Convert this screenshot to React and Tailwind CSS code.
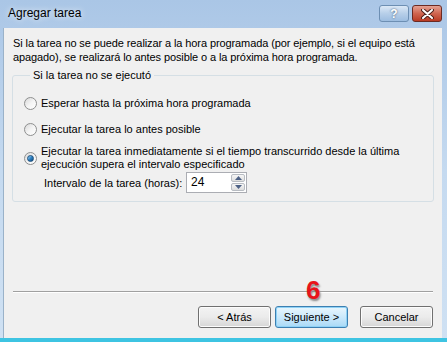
import React from "react";

const Radio = ({ checked }) => (
  <span className="relative flex h-[13px] w-[13px] shrink-0 items-center justify-center rounded-full border border-[#8e8f8f] bg-gradient-to-br from-[#d8d8d8] via-[#f4f4f4] to-[#ffffff]">
    {checked && (
      <span className="h-[7px] w-[7px] rounded-full border border-[#1c4f7c] bg-gradient-to-br from-[#9fd8f6] via-[#2f82c4] to-[#0e4a7d]" />
    )}
  </span>
);

const WinButton = ({ children, focused }) => (
  <button
    className={
      focused
        ? "h-[22px] w-[73px] rounded-[3px] border border-[#3c7fb1] bg-gradient-to-b from-[#e9f6fd] via-[#cbe9fb] to-[#a9daf6] text-[11px] text-black shadow-[inset_0_0_0_1px_#8fd2f6]"
        : "h-[22px] w-[73px] rounded-[3px] border border-[#707070] bg-gradient-to-b from-[#f3f3f3] via-[#ebebeb] to-[#d6d6d6] text-[11px] text-black shadow-[inset_0_0_0_1px_#fcfcfc]"
    }
  >
    {children}
  </button>
);

const App = () => {
  return (
    <div
      className="relative flex h-[342px] w-[447px] flex-col overflow-hidden bg-gradient-to-b from-[#aac6e6] via-[#c5daf0] to-[#cfe1f3] text-black"
      style={{ fontFamily: '"Liberation Sans", Arial, sans-serif' }}
    >
      {/* title bar */}
      <div className="flex h-[28px] shrink-0 items-start pl-[8px] pr-[5px] pt-[5px]">
        <span className="mt-[1px] text-[12px] leading-[14px] [text-shadow:0_0_6px_#ffffff]">
          Agregar tarea
        </span>
        <div className="ml-auto flex gap-[3px]">
          <div className="flex h-[17px] w-[30px] items-center justify-center rounded-[3px] border border-[#6d8fb3] bg-gradient-to-b from-[#dbe8f6] via-[#b7cfe9] to-[#9dbde0] text-[12px] font-bold leading-none text-white [text-shadow:0_0_2px_#2b4563]">
            ?
          </div>
          <div className="flex h-[17px] w-[30px] items-center justify-center rounded-[3px] border border-[#6b2a22] bg-gradient-to-b from-[#e4a193] via-[#cf6550] to-[#b93a23]">
            <svg width="13" height="10" viewBox="0 0 13 10">
              <path d="M2 1 L11 9 M11 1 L2 9" stroke="#4a1f1a" strokeWidth="4" strokeLinecap="round" />
              <path d="M2 1 L11 9 M11 1 L2 9" stroke="#ffffff" strokeWidth="2" strokeLinecap="round" />
            </svg>
          </div>
        </div>
      </div>

      {/* client area */}
      <div className="ml-[3px] mr-[5px] flex flex-1 flex-col border-l border-[#9ab2c9] bg-[#f0f0f0] text-[11px]">
        <p className="pl-[9px] pr-[10px] pt-[8px] leading-[14px] tracking-[-0.1px]">
          Si la tarea no se puede realizar a la hora programada (por ejemplo, si el equipo está apagado), se realizará lo antes posible o a la próxima hora programada.
        </p>

        <fieldset className="mx-[8px] mt-[4px] rounded-[3px] border border-[#d5dfe5] pb-[8px] pl-[11px] pr-[10px]">
          <legend className="ml-[6px] px-[3px] leading-[14px]">Si la tarea no se ejecutó</legend>

          <div className="mt-[14px] flex items-center gap-[4px] leading-[14px]">
            <Radio />
            <span>Esperar hasta la próxima hora programada</span>
          </div>
          <div className="mt-[12px] flex items-center gap-[4px] leading-[14px]">
            <Radio />
            <span>Ejecutar la tarea lo antes posible</span>
          </div>
          <div className="mt-[9px] flex items-center gap-[4px] leading-[13px]">
            <Radio checked />
            <span>
              Ejecutar la tarea inmediatamente si el tiempo transcurrido desde la última
              <br />
              ejecución supera el intervalo especificado
            </span>
          </div>
          <div className="mt-[1px] flex items-center pl-[20px]">
            <span className="w-[142px] leading-[14px]">Intervalo de la tarea (horas):</span>
            <div className="flex h-[21px] w-[61px] border border-[#abadb3] bg-white">
              <span className="flex-1 pl-[4px] pt-[2px] text-[12px] leading-[14px]">24</span>
              <div className="flex w-[16px] flex-col gap-[1px] p-[1px]">
                <div className="flex flex-1 items-center justify-center rounded-[2px] border border-[#b8bcc2] bg-gradient-to-b from-[#f6f6f6] to-[#dedede]">
                  <svg width="7" height="4" viewBox="0 0 7 4">
                    <path d="M0 4 L3.5 0 L7 4 Z" fill="#4d6185" />
                  </svg>
                </div>
                <div className="flex flex-1 items-center justify-center rounded-[2px] border border-[#b8bcc2] bg-gradient-to-b from-[#f6f6f6] to-[#dedede]">
                  <svg width="7" height="4" viewBox="0 0 7 4">
                    <path d="M0 0 L3.5 4 L7 0 Z" fill="#4d6185" />
                  </svg>
                </div>
              </div>
            </div>
          </div>
        </fieldset>

        <div className="flex-1" />

        <div className="mx-[9px] border-t border-[#a0a0a0] shadow-[0_1px_0_#ffffff]" />

        <div className="flex justify-end pb-[10px] pr-[9px] pt-[14px]">
          <div className="flex gap-[4px]">
            <WinButton>&lt; Atrás</WinButton>
            <WinButton focused>Siguiente &gt;</WinButton>
          </div>
          <div className="ml-[12px]">
            <WinButton>Cancelar</WinButton>
          </div>
        </div>
      </div>

      <div className="h-[4px] shrink-0 bg-[#3ec4e2]" />

      {/* step annotation */}
      <span className="absolute left-[306px] top-[277px] text-[26px] font-black leading-none text-[#e8141b] [text-shadow:1px_2px_2px_#8a8a8a]">
        6
      </span>
    </div>
  );
};

export default App;
